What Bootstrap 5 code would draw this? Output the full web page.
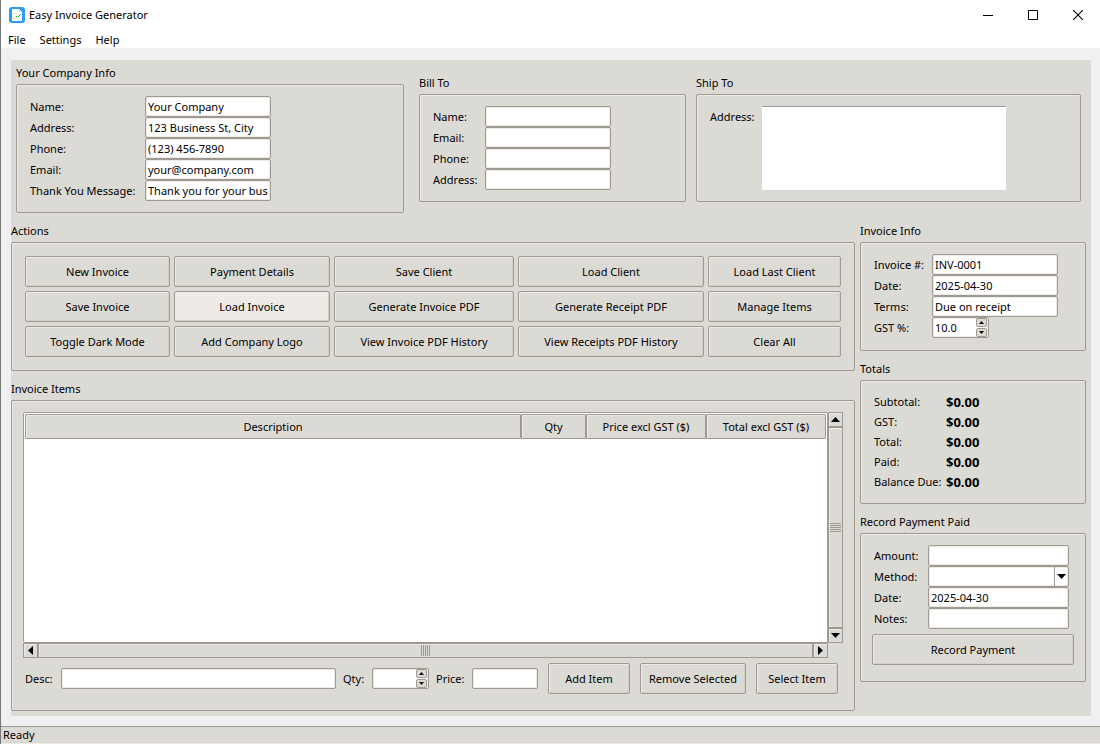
<!DOCTYPE html>
<html lang="en">
<head>
<meta charset="utf-8">
<meta name="viewport" content="width=device-width, initial-scale=1">
<title>Easy Invoice Generator</title>
<link href="https://cdn.jsdelivr.net/npm/bootstrap@5.3.0/dist/css/bootstrap.min.css" rel="stylesheet">
<style>
:root { --face:#dcdad5; --edge:#9e9a91; --lite:#eeebe7; }
body { font-family:"Noto Sans","Open Sans",sans-serif; font-size:11px; line-height:18px; color:#000; background:#f0f0f0; }
.window { border-left:1px solid #777; }
.titlebar { height:30px; padding-left:8px; background:#fff; }
.titlebar svg, .scroller svg, .spin svg, .combo svg { display:block; }
.win-btn { width:45px; height:30px; padding:0; border:0; border-radius:0; display:flex; align-items:center; justify-content:center; }
.menubar { height:19px; padding-left:7px; gap:14px; background:linear-gradient(#fff 17px,#f0f0f0); }
.menubar a { color:#000; text-decoration:none; line-height:20px; }
.workspace { margin:11px 9px 10px 10px; padding-bottom:5px; background:var(--face); }
.parties { display:grid; grid-template-columns:393fr 267fr 385fr; column-gap:10px; padding:3px 10px 0 5px; }
.parties > :first-child { margin-right:5px; }
.offset-group { padding-top:10px; }
.lower { display:grid; grid-template-columns:1fr 226px; gap:5px; padding-right:5px; margin-top:8px; }
.group-title { font-size:11px; font-weight:400; line-height:20px; margin:0 0 1px; }
.group-box { border:1px solid var(--edge); border-radius:2px; padding:11px 13px; box-shadow:inset 1px 1px var(--lite); }
.form-grid { display:grid; justify-content:start; }
.form-grid label { line-height:21px; white-space:nowrap; }
.cols-company { grid-template-columns:115px 126px; }
.cols-bill { grid-template-columns:52px 126px; }
.cols-ship { grid-template-columns:52px minmax(0,244px); }
.cols-info { grid-template-columns:58px 126px; padding-bottom:12px; }
.cols-pay { grid-template-columns:54px 141px; }
.entry { height:21px; width:100%; min-width:0; border:1px solid var(--edge); border-radius:2px; padding:0 2px; background:#fff; color:#000; box-shadow:inset 0 0 0 1px var(--lite); font-size:11px; line-height:19px; outline-offset:-2px; }
.memo { height:84px; width:100%; border:0; border-top:1px solid #999; border-radius:0; padding:2px; resize:none; display:block; }
.face-btn { height:31px; padding:0 6px; border:1px solid var(--edge); border-radius:2px; font-size:11px; line-height:18px; color:#000; background:var(--face); box-shadow:inset 1px 1px var(--lite), inset -1px -1px #d3d0ca; white-space:nowrap; }
.face-btn:hover, .face-btn.lit { background:#eeebe6; color:#000; border-color:var(--edge); }
.actions-grid { display:grid; grid-template-columns:145fr 156fr 180fr 186fr 133fr; gap:4px; padding:2px 0; }
.spin { position:relative; width:57px; }
.spin-btns { position:absolute; right:2px; top:1px; display:flex; flex-direction:column; gap:1px; }
.spin-btns button { width:11px; height:9px; padding:0; border:1px solid var(--edge); border-radius:2px; background:var(--face); display:flex; align-items:center; justify-content:center; }
.combo { position:relative; }
.combo select { appearance:none; }
.combo span { position:absolute; right:1px; top:1px; width:14px; height:19px; border-left:1px solid var(--edge); display:flex; align-items:center; justify-content:center; pointer-events:none; }
.totals-grid { display:grid; grid-template-columns:72px auto; margin:0; }
.totals-grid dt, .totals-grid dd { margin:0; line-height:20px; font-weight:400; white-space:nowrap; }
.totals-grid dd { font-size:13px; font-weight:700; }
.items-box { padding:11px 11px 16px; }
.tree-grid { display:grid; grid-template-columns:1fr 15px; grid-template-rows:minmax(120px,1fr) 15px; }
.tree { border:1px solid var(--edge); border-radius:2px; background:#fff; }
.tree table { width:100%; table-layout:fixed; border-collapse:separate; border-spacing:0; margin:0; padding:1px 1px 0; }
.tree th { height:25px; padding:0; border:1px solid var(--edge); border-radius:1px; font-weight:400; text-align:center; background:var(--face); box-shadow:inset 1px 1px var(--lite); }
.c-qty { width:65px; } .c-money { width:120px; }
.scroller { display:flex; }
.scroller button, .thumb { padding:0; border:1px solid var(--edge); border-radius:0; background:var(--face); box-shadow:inset 1px 1px var(--lite); display:flex; align-items:center; justify-content:center; }
.scroller button { width:15px; height:15px; flex:none; }
.thumb { flex:1; }
.entry-row { margin-top:5px; padding:0 5px 0 2px; }
.entry-row label { width:36px; padding-left:7px; flex:none; white-space:nowrap; }
.entry-row .first-label { padding-left:0; }
.entry-row .price-label { width:43px; }
.w-price { width:66px; flex:none; }
.add-group { margin-left:10px; gap:10px; }
.add-btn { width:82px; } .remove-btn { width:106px; }
.pay-box { padding-bottom:16px; }
.pay-btn { display:block; width:calc(100% + 4px); margin:5px -2px 0; }
.statusbar { border-top:1px solid var(--edge); border-bottom:1px solid var(--lite); background:var(--face); padding-left:2px; line-height:16px; }
</style>
</head>
<body>
<div class="window d-flex flex-column min-vh-100">
  <header>
    <div class="titlebar d-flex align-items-center">
      <svg width="16" height="16" viewBox="0 0 16 16"><rect width="16" height="16" rx="3" fill="#2d9cf4"/><path d="M3 2h7l3 3v9H3z" fill="#fff"/><path d="M10 2v3h3" fill="#b9dcfa"/><path d="M4.500 6.500h3" stroke="#bfe0fb"/><path d="M4 12l3-3" stroke="#f5a142" stroke-dasharray="1 1"/><path d="M7 9l1.500 1.500L12 7" fill="none" stroke="#26a65b" stroke-width="1"/></svg>
      <span class="ms-1 me-auto">Easy Invoice Generator</span>
      <button class="btn win-btn" type="button" aria-label="Minimize"><svg width="10" height="10"><path d="M0 5.500h10" stroke="#000"/></svg></button>
      <button class="btn win-btn" type="button" aria-label="Maximize"><svg width="10" height="10"><path d="M.5.5h9v9h-9z" fill="none" stroke="#000"/></svg></button>
      <button class="btn win-btn" type="button" aria-label="Close"><svg width="10" height="10"><path d="M0 0l10 10M10 0L0 10" stroke="#000" stroke-width="1.100"/></svg></button>
    </div>
    <nav class="menubar d-flex"><a href="#">File</a><a href="#">Settings</a><a href="#">Help</a></nav>
  </header>

  <main class="workspace d-flex flex-column flex-grow-1">
    <div class="parties">
      <section>
        <h2 class="group-title">Your Company Info</h2>
        <div class="group-box form-grid cols-company">
          <label for="cName">Name:</label><input class="entry" id="cName" value="Your Company">
          <label for="cAddr">Address:</label><input class="entry" id="cAddr" value="123 Business St, City">
          <label for="cPhone">Phone:</label><input class="entry" id="cPhone" value="(123) 456-7890">
          <label for="cEmail">Email:</label><input class="entry" id="cEmail" value="your@company.com">
          <label for="cThanks">Thank You Message:</label><input class="entry" id="cThanks" value="Thank you for your business!">
        </div>
      </section>
      <section class="offset-group">
        <h2 class="group-title">Bill To</h2>
        <div class="group-box form-grid cols-bill">
          <label for="bName">Name:</label><input class="entry" id="bName">
          <label for="bEmail">Email:</label><input class="entry" id="bEmail">
          <label for="bPhone">Phone:</label><input class="entry" id="bPhone">
          <label for="bAddr">Address:</label><input class="entry" id="bAddr">
        </div>
      </section>
      <section class="offset-group">
        <h2 class="group-title">Ship To</h2>
        <div class="group-box form-grid cols-ship">
          <label for="sAddr">Address:</label><textarea class="memo" id="sAddr"></textarea>
        </div>
      </section>
    </div>

    <div class="lower flex-grow-1">
      <div class="d-flex flex-column gap-2">
        <section>
          <h2 class="group-title">Actions</h2>
          <div class="group-box">
            <div class="actions-grid">
              <button class="btn face-btn" type="button">New Invoice</button>
              <button class="btn face-btn" type="button">Payment Details</button>
              <button class="btn face-btn" type="button">Save Client</button>
              <button class="btn face-btn" type="button">Load Client</button>
              <button class="btn face-btn" type="button">Load Last Client</button>
              <button class="btn face-btn" type="button">Save Invoice</button>
              <button class="btn face-btn lit" type="button">Load Invoice</button>
              <button class="btn face-btn" type="button">Generate Invoice PDF</button>
              <button class="btn face-btn" type="button">Generate Receipt PDF</button>
              <button class="btn face-btn" type="button">Manage Items</button>
              <button class="btn face-btn" type="button">Toggle Dark Mode</button>
              <button class="btn face-btn" type="button">Add Company Logo</button>
              <button class="btn face-btn" type="button">View Invoice PDF History</button>
              <button class="btn face-btn" type="button">View Receipts PDF History</button>
              <button class="btn face-btn" type="button">Clear All</button>
            </div>
          </div>
        </section>
        <section class="d-flex flex-column flex-grow-1">
          <h2 class="group-title">Invoice Items</h2>
          <div class="group-box items-box d-flex flex-column flex-grow-1">
            <div class="tree-grid flex-grow-1">
              <div class="tree">
                <table>
                  <thead><tr><th scope="col">Description</th><th class="c-qty" scope="col">Qty</th><th class="c-money" scope="col">Price excl GST ($)</th><th class="c-money" scope="col">Total excl GST ($)</th></tr></thead>
                </table>
              </div>
              <div class="scroller flex-column">
                <button type="button" aria-label="Scroll up"><svg width="9" height="5"><path d="M4.500 0L9 5H0z"/></svg></button>
                <div class="thumb"><svg width="11" height="9"><path d="M0 .5h11M0 2.500h11M0 4.500h11M0 6.500h11M0 8.500h11" stroke="#9e9a91"/></svg></div>
                <button type="button" aria-label="Scroll down"><svg width="9" height="5"><path d="M4.500 5L9 0H0z"/></svg></button>
              </div>
              <div class="scroller">
                <button type="button" aria-label="Scroll left"><svg width="5" height="9"><path d="M0 4.500L5 0v9z"/></svg></button>
                <div class="thumb"><svg width="9" height="11"><path d="M.5 0v11M2.500 0v11M4.500 0v11M6.500 0v11M8.500 0v11" stroke="#9e9a91"/></svg></div>
                <button type="button" aria-label="Scroll right"><svg width="5" height="9"><path d="M5 4.500L0 0v9z"/></svg></button>
              </div>
            </div>
            <div class="entry-row d-flex align-items-center">
              <label class="first-label" for="iDesc">Desc:</label><input class="entry flex-grow-1 w-auto" id="iDesc">
              <label for="iQty">Qty:</label>
              <div class="spin flex-shrink-0"><input class="entry" id="iQty"><div class="spin-btns"><button type="button" aria-label="Increase quantity"><svg width="5" height="3"><path d="M2.500 0L5 3H0z"/></svg></button><button type="button" aria-label="Decrease quantity"><svg width="5" height="3"><path d="M2.500 3L5 0H0z"/></svg></button></div></div>
              <label class="price-label" for="iPrice">Price:</label><input class="entry w-price" id="iPrice">
              <div class="add-group d-flex">
                <button class="btn face-btn add-btn" type="button">Add Item</button>
                <button class="btn face-btn remove-btn" type="button">Remove Selected</button>
                <button class="btn face-btn add-btn" type="button">Select Item</button>
              </div>
            </div>
          </div>
        </section>
      </div>

      <aside class="d-flex flex-column gap-2">
        <section>
          <h2 class="group-title">Invoice Info</h2>
          <div class="group-box form-grid cols-info">
            <label for="vNum">Invoice #:</label><input class="entry" id="vNum" value="INV-0001">
            <label for="vDate">Date:</label><input class="entry" id="vDate" value="2025-04-30">
            <label for="vTerms">Terms:</label><input class="entry" id="vTerms" value="Due on receipt">
            <label for="vGst">GST %:</label>
            <div class="spin"><input class="entry" id="vGst" value="10.0"><div class="spin-btns"><button type="button" aria-label="Increase GST"><svg width="5" height="3"><path d="M2.500 0L5 3H0z"/></svg></button><button type="button" aria-label="Decrease GST"><svg width="5" height="3"><path d="M2.500 3L5 0H0z"/></svg></button></div></div>
          </div>
        </section>
        <section>
          <h2 class="group-title">Totals</h2>
          <div class="group-box">
            <dl class="totals-grid">
              <dt>Subtotal:</dt><dd>$0.00</dd>
              <dt>GST:</dt><dd>$0.00</dd>
              <dt>Total:</dt><dd>$0.00</dd>
              <dt>Paid:</dt><dd>$0.00</dd>
              <dt>Balance Due:</dt><dd>$0.00</dd>
            </dl>
          </div>
        </section>
        <section>
          <h2 class="group-title">Record Payment Paid</h2>
          <div class="group-box pay-box">
            <div class="form-grid cols-pay">
              <label for="pAmount">Amount:</label><input class="entry" id="pAmount">
              <label for="pMethod">Method:</label>
              <div class="combo"><select class="entry" id="pMethod"><option></option><option>Cash</option><option>Card</option></select><span><svg width="9" height="5"><path d="M4.500 5L9 0H0z"/></svg></span></div>
              <label for="pDate">Date:</label><input class="entry" id="pDate" value="2025-04-30">
              <label for="pNotes">Notes:</label><input class="entry" id="pNotes">
            </div>
            <button class="btn face-btn pay-btn" type="button">Record Payment</button>
          </div>
        </section>
      </aside>
    </div>
  </main>
  <footer class="statusbar">Ready</footer>
</div>
<script src="https://cdn.jsdelivr.net/npm/bootstrap@5.3.0/dist/js/bootstrap.bundle.min.js"></script>
</body>
</html>
